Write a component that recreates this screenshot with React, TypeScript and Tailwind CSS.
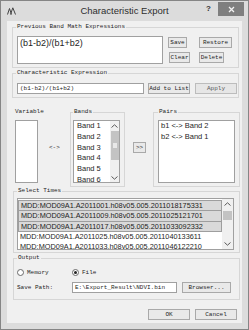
const mono = "font-['Liberation_Mono',monospace] text-[6px] leading-[8px] text-[#1e1e1e]";
const sans = "font-['Liberation_Sans',Arial,sans-serif]";

function Btn({ label, className = "", dim = false }: { label: string; className?: string; dim?: boolean }) {
  return (
    <div
      className={`flex items-center justify-center h-[11px] border ${
        dim ? "border-[#bcbcbc] bg-[#e6e6e6] text-[#555]" : "border-[#a9a9a9] bg-[#e9e9e9]"
      } ${mono} leading-none ${className}`}
    >
      {label}
    </div>
  );
}

function Chevron({ up = false }: { up?: boolean }) {
  return (
    <svg width="7" height="4" viewBox="0 0 7 4" className="block">
      <path
        d={up ? "M0.5 3.5L3.5 0.8L6.5 3.5" : "M0.5 0.5L3.5 3.2L6.5 0.5"}
        fill="none"
        stroke="#5a5a5a"
        strokeWidth="1"
      />
    </svg>
  );
}

function AppIcon() {
  return (
    <svg width="9" height="8" viewBox="0 0 9 8" className="block">
      <path d="M0.5 7.5L2.5 1.5L4.5 7.5M3.5 7.5L5.8 0.8L8.5 7.5" fill="none" stroke="#444" strokeWidth="1" />
    </svg>
  );
}

const bands = ["Band 1", "Band 2", "Band 3", "Band 4", "Band 5", "Band 6"];
const pairs = ["b1 <-> Band 2", "b2 <-> Band 1"];
const times = [
  "MDD:MOD09A1.A2011001.h08v05.005.2011018175331",
  "MDD:MOD09A1.A2011009.h08v05.005.2011025121701",
  "MDD:MOD09A1.A2011017.h08v05.005.2011033092332",
  "MDD:MOD09A1.A2011025.h08v05.005.2011040133611",
  "MDD:MOD09A1.A2011033.h08v05.005.2011046122210",
];

export default function App() {
  return (
    <div className={`w-[249px] h-[330px] bg-[#dcdcdc] border border-[#858585] flex flex-col ${sans}`}>
      {/* title bar */}
      <div className="h-[20px] flex items-center shrink-0">
        <div className="w-[60px] h-full flex items-center pl-[6px]">
          <AppIcon />
        </div>
        <div className="flex-1 text-center text-[9.5px] leading-none text-[#2e2e2e]">Characteristic Export</div>
        <div className="w-[60px] h-full flex items-start justify-end pr-[4px]">
          <span className="mt-[4px] mr-[7px] text-[8px] leading-none font-bold text-[#333]">?</span>
          <div className="mt-[1px] w-[26px] h-[14px] bg-[#7f7f7f] flex items-center justify-center">
            <svg width="7" height="7" viewBox="0 0 7 7">
              <path d="M1 1L6 6M6 1L1 6" stroke="#f2f2f2" strokeWidth="1.3" />
            </svg>
          </div>
        </div>
      </div>

      {/* client area */}
      <div className="mx-[6px] mb-[6px] flex-1 bg-[#f0f0f0] flex flex-col">
        {/* previous expressions */}
        <fieldset className="ml-[5px] mt-[2px] w-[227px] border border-[#d6d6d6] pl-[3px] pb-[3px]">
          <legend className={`${mono} px-[1px]`}>Previous Band Math Expressions</legend>
          <div className="flex items-start pt-[5px]">
            <div className="ml-[1px] w-[146px] h-[28px] border border-[#a0a0a0] bg-white pl-[2px] pt-[1px] text-[9px] leading-[11px] text-[#1e1e1e]">
              (b1-b2)/(b1+b2)
            </div>
            <div className="ml-[5px] flex flex-col">
              <div className="flex mt-[1px]">
                <Btn label="Save" className="w-[19px]" />
                <Btn label="Restore" className="ml-[12px] w-[33px]" />
              </div>
              <div className="flex mt-[4px]">
                <Btn label="Clear" className="ml-[1px] w-[21px]" />
                <Btn label="Delete" className="ml-[9px] w-[25px]" />
              </div>
            </div>
          </div>
        </fieldset>

        {/* characteristic expression */}
        <fieldset className="ml-[5px] mt-[1px] w-[227px] border border-[#d6d6d6] pl-[3px] pb-[3px]">
          <legend className={`${mono} px-[1px]`}>Characteristic Expression</legend>
          <div className="flex items-start pt-[6px]">
            <div className={`ml-[1px] w-[127px] h-[11px] border border-[#a0a0a0] bg-white pl-[2px] flex items-center ${mono}`}>
              (b1-b2)/(b1+b2)
            </div>
            <Btn label="Add to List" className="ml-[4px] w-[42px]" />
            <Btn label="Apply" className="ml-[5px] w-[42px]" dim />
          </div>
        </fieldset>

        {/* variable / bands / pairs */}
        <div className="mt-[10px] ml-[8px] flex items-start">
          <div className="w-[23px] shrink-0 flex flex-col">
            <div className={`whitespace-nowrap ${mono}`}>Variable</div>
            <div className="mt-[4px] w-[23px] h-[63px] border border-[#a0a0a0] bg-white" />
          </div>
          <div className={`ml-[11px] mt-[36px] w-[12px] shrink-0 whitespace-nowrap ${mono}`}>{"<->"}</div>
          <fieldset className="ml-[9px] w-[55px] shrink-0 border border-[#d6d6d6] pl-[2px] pb-[3px]">
            <legend className={`${mono} px-[1px]`}>Bands</legend>
            <div className="pt-[4px]">
              <div className="w-[47px] h-[63px] border border-[#a0a0a0] bg-white flex overflow-hidden">
                <div className="flex-1 flex flex-col pl-[3px] overflow-hidden">
                  {bands.map((b) => (
                    <div key={b} className="h-[10.8px] shrink-0 text-[7.5px] leading-[10.8px] text-[#1e1e1e] whitespace-nowrap">
                      {b}
                    </div>
                  ))}
                </div>
                <div className="w-[9px] flex flex-col items-center bg-[#f0f0f0]">
                  <div className="h-[9px] flex items-center">
                    <Chevron up />
                  </div>
                  <div className="mt-[1px] w-[8px] h-[29px] bg-[#c3c3c3] flex items-center justify-center">
                    <div className="w-[4px] h-[5px] bg-[#e8e8e8]" />
                  </div>
                  <div className="flex-1" />
                  <div className="h-[9px] flex items-center">
                    <Chevron />
                  </div>
                </div>
              </div>
            </div>
          </fieldset>
          <Btn label=">>" className="ml-[8px] mt-[34px] w-[13px] shrink-0" />
          <fieldset className="ml-[7px] w-[87px] shrink-0 border border-[#d6d6d6] pl-[4px] pb-[3px]">
            <legend className={`${mono} px-[1px]`}>Pairs</legend>
            <div className="pt-[4px]">
              <div className="w-[77px] h-[63px] border border-[#a0a0a0] bg-white pl-[2px]">
                {pairs.map((p) => (
                  <div key={p} className="h-[10.8px] text-[7.5px] leading-[10.8px] text-[#1e1e1e] whitespace-nowrap">
                    {p}
                  </div>
                ))}
              </div>
            </div>
          </fieldset>
        </div>

        {/* select times */}
        <fieldset className="ml-[6px] w-[227px] border border-[#d6d6d6] pl-[3px] pb-[2px]">
          <legend className={`${mono} px-[1px]`}>Select Times</legend>
          <div className="pt-[3px]">
            <div className="w-[217px] h-[52px] border border-[#a0a0a0] bg-white flex overflow-hidden">
              <div className="w-[204px] flex flex-col pt-[1px] overflow-hidden">
                {times.map((t, i) => (
                  <div
                    key={t}
                    className={`h-[10.5px] shrink-0 pl-[2px] text-[7.3px] leading-[10px] text-[#1e1e1e] whitespace-nowrap ${
                      i === 1
                        ? "bg-[#d9d9d9] border-x border-[#9e9e9e]"
                        : i < 3
                        ? "bg-[#d9d9d9] border border-[#9e9e9e]"
                        : ""
                    }`}
                  >
                    {t}
                  </div>
                ))}
              </div>
              <div className="w-[11px] flex flex-col items-center bg-[#f0f0f0]">
                <div className="h-[10px] flex items-center">
                  <Chevron up />
                </div>
                <div className="mt-[2px] w-[9px] h-[9px] bg-[#c3c3c3]" />
                <div className="flex-1" />
                <div className="h-[10px] flex items-center">
                  <Chevron />
                </div>
              </div>
            </div>
          </div>
        </fieldset>

        {/* output */}
        <fieldset className="ml-[6px] mt-[1px] w-[227px] border border-[#d6d6d6] pl-[3px] pb-[6px]">
          <legend className={`${mono} px-[1px]`}>Output</legend>
          <div className="mt-[7px] flex items-center h-[7px]">
            <div className="w-[55px] flex items-center">
              <div className="w-[7px] h-[7px] rounded-full border border-[#6a6a6a] bg-white" />
              <span className={`ml-[3px] ${mono}`}>Memory</span>
            </div>
            <div className="flex items-center">
              <div className="w-[7px] h-[7px] rounded-full border border-[#6a6a6a] bg-white flex items-center justify-center">
                <div className="w-[3px] h-[3px] rounded-full bg-[#222]" />
              </div>
              <span className={`ml-[3px] ${mono}`}>File</span>
            </div>
          </div>
          <div className="mt-[6px] flex items-center">
            <div className={`w-[55px] ${mono}`}>Save Path:</div>
            <div className={`w-[105px] h-[11px] border border-[#a0a0a0] bg-white pl-[2px] flex items-center ${mono}`}>
              E:\Export_Result\NDVI.bin
            </div>
            <Btn label="Browser..." className="ml-[5px] w-[49px]" />
          </div>
        </fieldset>

        {/* dialog buttons */}
        <div className="mt-[9px] flex justify-end pr-[5px]">
          <Btn label="OK" className="w-[42px]" />
          <Btn label="Cancel" className="ml-[5px] w-[42px]" />
        </div>
      </div>
    </div>
  );
}
